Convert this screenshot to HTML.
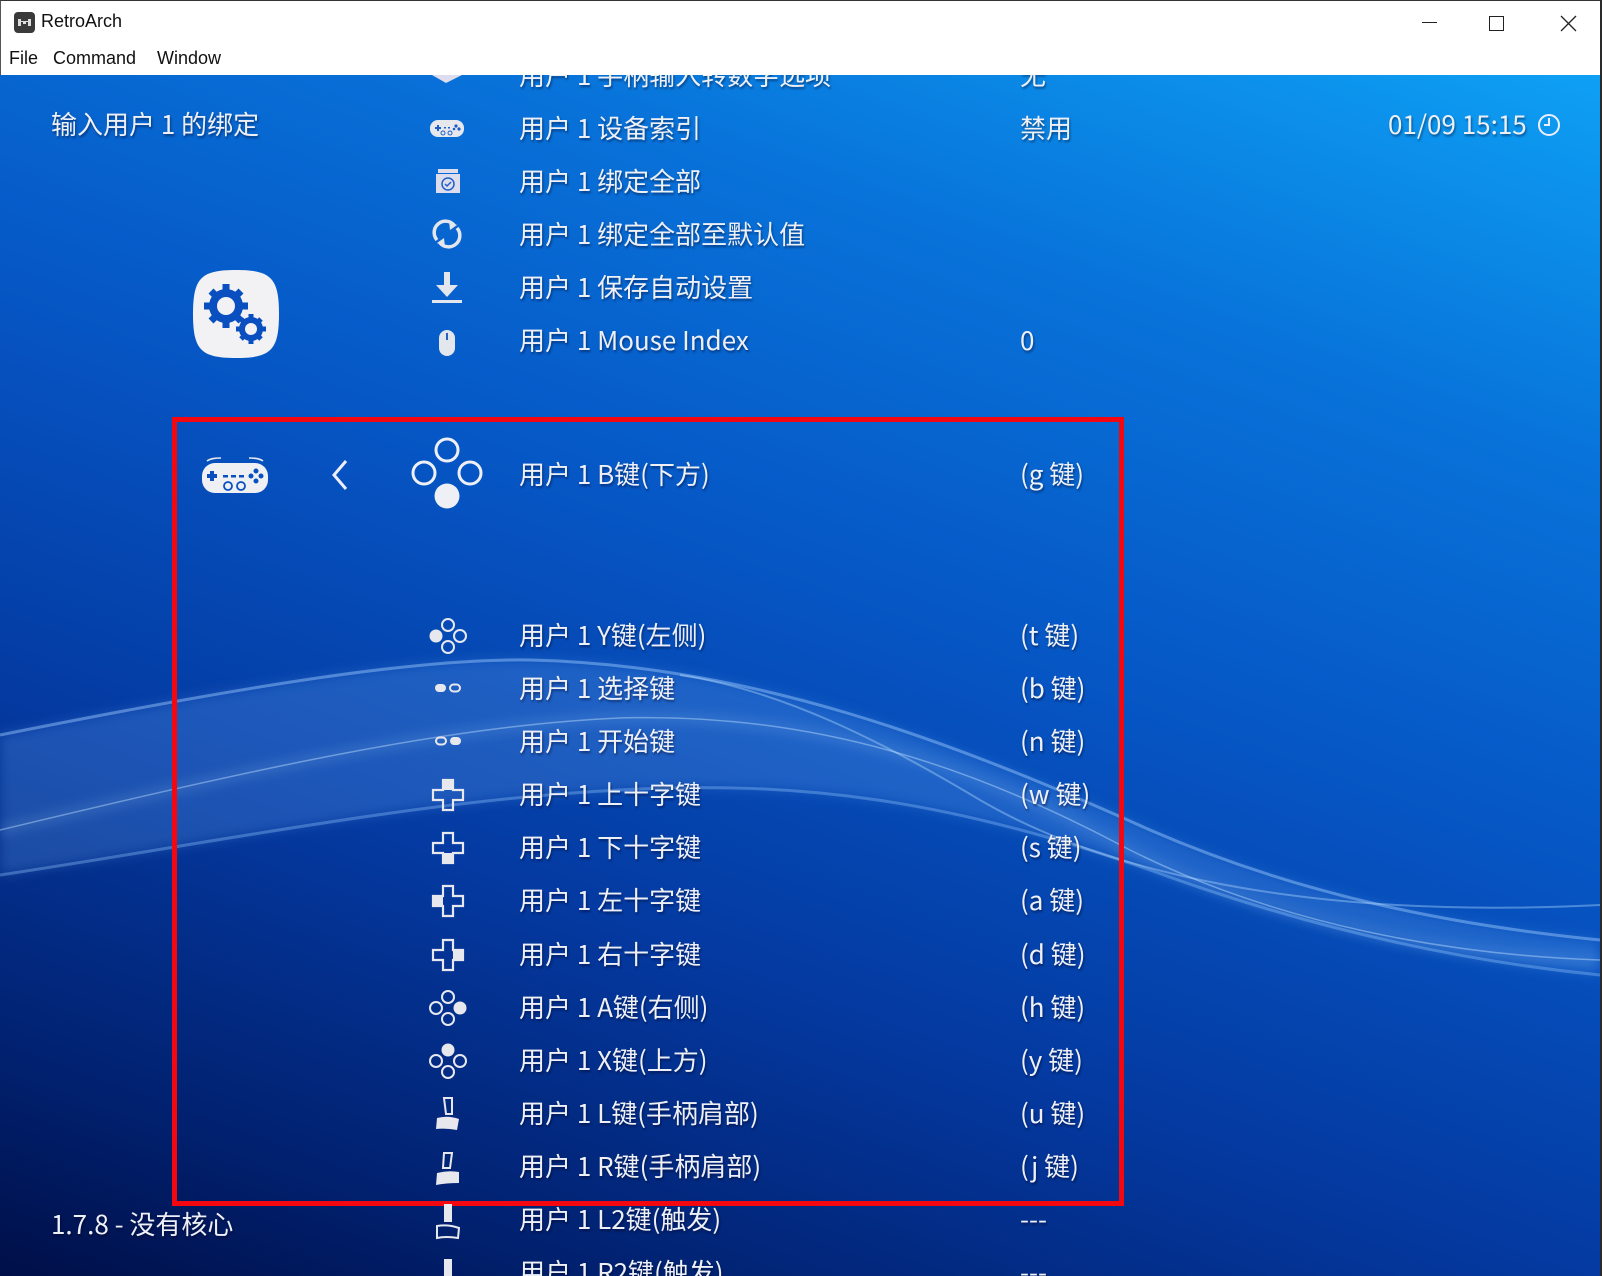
<!DOCTYPE html>
<html><head><meta charset="utf-8"><style>
*{margin:0;padding:0;box-sizing:border-box}
html,body{width:1602px;height:1276px;overflow:hidden;background:#fff}
body{position:relative;font-family:"Noto Sans CJK SC","Liberation Sans",sans-serif}
#tb{position:absolute;left:0;top:0;width:1602px;height:75px;background:#fff;border-top:1px solid #333;border-left:1px solid #555;border-right:2px solid #333}
.ui{font-family:"Liberation Sans","Noto Sans CJK SC",sans-serif;color:#111;position:absolute;font-size:18px;white-space:nowrap}
#main{position:absolute;left:0;top:75px;width:1600px;height:1201px;overflow:hidden;
background:linear-gradient(200deg,#0ea0f4 0%,#0873da 22%,#0655c4 45%,#0439a0 68%,#01206e 88%,#000f48 100%)}
#edge{position:absolute;left:1600px;top:0;width:2px;height:1276px;background:#2a2a2a}
.t{position:absolute;color:#eef0f6;font-size:26px;line-height:30px;white-space:nowrap;text-shadow:1px 2px 2px rgba(0,0,30,.45)}
.ic{position:absolute}
</style></head><body>
<div id="tb">
 <svg class="ic" style="left:13px;top:11px" width="21" height="21" viewBox="0 0 21 21"><rect width="21" height="21" rx="4" fill="#3a3a3a"/><path d="M4 7h3v2h7V7h3v7h-3v-2H7v2H4z" fill="#ddd"/><rect x="7" y="10" width="2" height="2" fill="#3a3a3a"/><rect x="12" y="10" width="2" height="2" fill="#3a3a3a"/></svg>
 <div class="ui" style="left:40px;top:10px">RetroArch</div>
 <div class="ui" style="left:8px;top:47px">File</div>
 <div class="ui" style="left:52px;top:47px">Command</div>
 <div class="ui" style="left:156px;top:47px">Window</div>
 <div style="position:absolute;left:1421px;top:21px;width:15px;height:1px;background:#222"></div>
 <div style="position:absolute;left:1488px;top:15px;width:15px;height:15px;border:1px solid #222"></div>
 <svg class="ic" style="left:1559px;top:14px" width="17" height="17"><path d="M1 1L16 16M16 1L1 16" stroke="#222" stroke-width="1.3"/></svg>
</div>
<div id="main">
 <svg style="position:absolute;left:0;top:0" width="1600" height="1201" viewBox="0 75 1600 1201">
  <defs><filter id="bl"><feGaussianBlur stdDeviation="6"/></filter></defs>
  <path d="M0 735 C250 685 420 658 530 660 C750 665 950 740 1150 830 C1300 895 1450 925 1600 940 L1600 975 C1450 960 1300 925 1150 870 C950 800 800 780 620 790 C420 800 200 845 0 875Z" fill="rgba(120,180,255,0.22)" filter="url(#bl)"/>
  <path d="M0 735 C250 685 420 658 530 660 C750 665 950 740 1150 830 C1300 895 1450 925 1600 940" fill="none" stroke="rgba(160,205,255,0.45)" stroke-width="3"/>
  <path d="M0 875 C200 845 420 800 620 790 C800 780 950 800 1150 870 C1300 925 1450 960 1600 975" fill="none" stroke="rgba(150,200,255,0.35)" stroke-width="3"/>
  <path d="M0 830 C250 770 450 725 620 718 C820 712 980 770 1130 850 C1280 925 1450 955 1600 960" fill="none" stroke="rgba(170,215,255,0.4)" stroke-width="4" filter="url(#bl)"/>
  <path d="M0 830 C250 770 450 725 620 718 C820 712 980 770 1130 850 C1280 925 1450 955 1600 960" fill="none" stroke="rgba(190,225,255,0.45)" stroke-width="1.5"/>
  <path d="M680 675 C780 690 880 740 980 800 C1100 870 1300 920 1600 905" fill="none" stroke="rgba(180,220,255,0.4)" stroke-width="2"/>
 </svg>
 <div style="position:absolute;left:172px;top:342px;width:952px;height:789px;border:5px solid #f4070f"></div>
</div>
<div id="edge"></div>

<div style="position:absolute;left:0;top:75px;width:1600px;height:1201px;overflow:hidden">
<div style="position:absolute;left:0;top:-75px">
<div class="t" style="left:51px;top:109px">输入用户 1 的绑定</div>
<div class="t" style="left:1388px;top:109px">01/09 15:15</div>
<svg class="ic" style="left:1537px;top:113px" width="24" height="24"><circle cx="12" cy="12" r="10" fill="none" stroke="#eef" stroke-width="2"/><path d="M12 5v7h-5" fill="none" stroke="#eef" stroke-width="2"/></svg>
<div class="t" style="left:51px;top:1209px">1.7.8 - 没有核心</div>

<svg class="ic" style="left:191px;top:268px" width="90" height="92" viewBox="0 0 90 92"><path d="M45 2C80 2 88 10 88 46S80 90 45 90 2 82 2 46 10 2 45 2Z" fill="#f2f2f4"/>
<g fill="#0a4fc0"><circle cx="35" cy="38" r="17"/><circle cx="60" cy="61" r="12"/>
<g stroke="#0a4fc0" stroke-width="7"><path d="M35 16v44M13 38h44M20 23l30 30M50 23L20 53"/><path d="M60 46v30M45 61h30M50 51l20 20M70 51L50 71" stroke-width="5"/></g></g>
<circle cx="35" cy="38" r="9" fill="#f2f2f4"/><circle cx="60" cy="61" r="6" fill="#f2f2f4"/></svg>

<div class="t" style="left:519px;top:60px">用户 1 手柄输入转数字选项</div><div class="t" style="left:1020px;top:60px">无</div>
<svg class="ic" style="left:430px;top:75px" width="34" height="8"><path d="M2 0 L16 8 L32 0Z" fill="#dde"/></svg>
<svg class="ic" style="left:429px;top:117px" width="36" height="22" viewBox="0 0 36 22"><rect x="1" y="3" width="34" height="17" rx="8" fill="#e6e8ee"/><g fill="#1a5fc8"><path d="M6 10h6v2H6zM8 8h2v6H8z"/><circle cx="27" cy="9" r="1.6"/><circle cx="30" cy="12" r="1.6"/><circle cx="25" cy="12" r="1.3"/><circle cx="14" cy="16" r="2" fill="none" stroke="#1a5fc8"/><circle cx="21" cy="16" r="2" fill="none" stroke="#1a5fc8"/><rect x="15" y="10" width="2" height="1.5"/><rect x="19" y="10" width="2" height="1.5"/></g></svg>
<div class="t" style="left:519px;top:113px">用户 1 设备索引</div><div class="t" style="left:1020px;top:113px">禁用</div>
<svg class="ic" style="left:435px;top:168px" width="26" height="26" viewBox="0 0 26 26"><rect x="3" y="1" width="20" height="4" fill="#dde"/><rect x="1" y="6" width="24" height="19" fill="#dde"/><circle cx="13" cy="16" r="6" fill="none" stroke="#2060c8" stroke-width="1.5"/><path d="M10 16l2 2 4-4" stroke="#2060c8" fill="none" stroke-width="1.5"/></svg>
<div class="t" style="left:519px;top:166px">用户 1 绑定全部</div>
<svg class="ic" style="left:432px;top:219px" width="30" height="30" viewBox="0 0 30 30"><path d="M22 6A11 11 0 0 0 5 21M8 24A11 11 0 0 0 25 9" fill="none" stroke="#e4e6ee" stroke-width="3.5"/><path d="M17 2l8 4-7 5zM13 28l-8-4 7-5z" fill="#e4e6ee"/></svg>
<div class="t" style="left:519px;top:219px">用户 1 绑定全部至默认值</div>
<svg class="ic" style="left:430px;top:271px" width="34" height="34" viewBox="0 0 34 34"><rect x="14" y="1" width="6" height="14" fill="#e4e6ee"/><path d="M6 14h22L17 26z" fill="#e4e6ee"/><rect x="2" y="29" width="30" height="3" fill="#e4e6ee"/></svg>
<div class="t" style="left:519px;top:272px">用户 1 保存自动设置</div>
<svg class="ic" style="left:438px;top:329px" width="18" height="28" viewBox="0 0 18 28"><rect x="1" y="1" width="16" height="26" rx="8" fill="#e4e6ee"/><rect x="8" y="4" width="2" height="7" fill="#2a60c0"/></svg>
<div class="t" style="left:519px;top:325px">用户 1 Mouse Index</div><div class="t" style="left:1020px;top:325px">0</div>

<svg class="ic" style="left:201px;top:455px" width="68" height="40" viewBox="0 0 68 40"><path d="M6 6C10 3 16 3 20 3M48 3C52 3 58 3 62 6" stroke="#e6e8ee" stroke-width="1.5" fill="none"/><rect x="1" y="8" width="66" height="30" rx="13" fill="#eef0f4"/><g fill="#0a4fc0"><path d="M6 19h10v4H6zM9 16h4v10H9z"/><rect x="22" y="20" width="5" height="2.5"/><rect x="30" y="20" width="5" height="2.5"/><rect x="38" y="20" width="5" height="2.5"/><circle cx="55" cy="16" r="2.5"/><circle cx="60" cy="21" r="2.5"/><circle cx="50" cy="21" r="2.5"/><circle cx="55" cy="26" r="2.5"/></g><circle cx="27" cy="31" r="4" fill="none" stroke="#0a4fc0" stroke-width="1.8"/><circle cx="40" cy="31" r="4" fill="none" stroke="#0a4fc0" stroke-width="1.8"/></svg>
<svg class="ic" style="left:331px;top:459px" width="18" height="32"><path d="M15 2L3 16l12 14" fill="none" stroke="#eef" stroke-width="3"/></svg>
<svg class="ic" style="left:409px;top:437px" width="76" height="76" viewBox="0 0 76 76"><g fill="none" stroke="#eef0f6" stroke-width="3"><circle cx="38" cy="13" r="11"/><circle cx="15" cy="36" r="11"/><circle cx="61" cy="36" r="11"/></g><circle cx="38" cy="59" r="12.5" fill="#eef0f6"/></svg>
<div class="t" style="left:519px;top:459px">用户 1 B键(下方)</div><div class="t" style="left:1020px;top:459px">(g 键)</div>
</div></div>

<div style="position:absolute;left:0;top:0;width:1600px;height:1276px;overflow:hidden">
<div class="t" style="left:519px;top:620px">用户 1 Y键(左侧)</div><div class="t" style="left:1020px;top:620px">(t 键)</div>
<svg class="ic" style="left:429px;top:617px" width="38" height="38" viewBox="0 0 38 38"><g fill="none" stroke="#e6e8ee" stroke-width="2"><circle cx="19" cy="8" r="6"/><circle cx="31" cy="19" r="6"/><circle cx="19" cy="30" r="6"/></g><circle cx="7" cy="19" r="6.5" fill="#e6e8ee"/></svg>
<div class="t" style="left:519px;top:673px">用户 1 选择键</div><div class="t" style="left:1020px;top:673px">(b 键)</div>
<svg class="ic" style="left:434px;top:682px" width="28" height="12"><rect x="1" y="2" width="11" height="8" rx="4" fill="#e6e8ee"/><rect x="16" y="2.5" width="10" height="7" rx="3.5" fill="none" stroke="#e6e8ee" stroke-width="2"/></svg>
<div class="t" style="left:519px;top:726px">用户 1 开始键</div><div class="t" style="left:1020px;top:726px">(n 键)</div>
<svg class="ic" style="left:434px;top:735px" width="28" height="12"><rect x="2" y="2.5" width="10" height="7" rx="3.5" fill="none" stroke="#e6e8ee" stroke-width="2"/><rect x="16" y="2" width="11" height="8" rx="4" fill="#e6e8ee"/></svg>

<svg class="ic" style="left:431px;top:778px" width="34" height="34" viewBox="0 0 34 34"><path d="M12 2h10v10h10v10H22v10H12V22H2V12h10z" fill="none" stroke="#e6e8ee" stroke-width="2.2"/><rect x="12" y="2" width="10" height="10" fill="#e6e8ee"/></svg>
<div class="t" style="left:519px;top:779px">用户 1 上十字键</div><div class="t" style="left:1020px;top:779px">(w 键)</div>
<svg class="ic" style="left:431px;top:831px" width="34" height="34" viewBox="0 0 34 34"><path d="M12 2h10v10h10v10H22v10H12V22H2V12h10z" fill="none" stroke="#e6e8ee" stroke-width="2.2"/><rect x="12" y="22" width="10" height="10" fill="#e6e8ee"/></svg>
<div class="t" style="left:519px;top:832px">用户 1 下十字键</div><div class="t" style="left:1020px;top:832px">(s 键)</div>
<svg class="ic" style="left:431px;top:884px" width="34" height="34" viewBox="0 0 34 34"><path d="M12 2h10v10h10v10H22v10H12V22H2V12h10z" fill="none" stroke="#e6e8ee" stroke-width="2.2"/><rect x="2" y="12" width="10" height="10" fill="#e6e8ee"/></svg>
<div class="t" style="left:519px;top:885px">用户 1 左十字键</div><div class="t" style="left:1020px;top:885px">(a 键)</div>
<svg class="ic" style="left:431px;top:938px" width="34" height="34" viewBox="0 0 34 34"><path d="M12 2h10v10h10v10H22v10H12V22H2V12h10z" fill="none" stroke="#e6e8ee" stroke-width="2.2"/><rect x="22" y="12" width="10" height="10" fill="#e6e8ee"/></svg>
<div class="t" style="left:519px;top:939px">用户 1 右十字键</div><div class="t" style="left:1020px;top:939px">(d 键)</div>

<svg class="ic" style="left:429px;top:989px" width="38" height="38" viewBox="0 0 38 38"><g fill="none" stroke="#e6e8ee" stroke-width="2"><circle cx="19" cy="8" r="6"/><circle cx="7" cy="19" r="6"/><circle cx="19" cy="30" r="6"/></g><circle cx="31" cy="19" r="6.5" fill="#e6e8ee"/></svg>
<div class="t" style="left:519px;top:992px">用户 1 A键(右侧)</div><div class="t" style="left:1020px;top:992px">(h 键)</div>
<svg class="ic" style="left:429px;top:1042px" width="38" height="38" viewBox="0 0 38 38"><g fill="none" stroke="#e6e8ee" stroke-width="2"><circle cx="31" cy="19" r="6"/><circle cx="7" cy="19" r="6"/><circle cx="19" cy="30" r="6"/></g><circle cx="19" cy="8" r="6.5" fill="#e6e8ee"/></svg>
<div class="t" style="left:519px;top:1045px">用户 1 X键(上方)</div><div class="t" style="left:1020px;top:1045px">(y 键)</div>

<svg class="ic" style="left:434px;top:1096px" width="28" height="38" viewBox="0 0 28 38"><path d="M10 2h8v16h-6z" fill="none" stroke="#e6e8ee" stroke-width="2"/><path d="M3 22 Q14 19 25 23 L23 34 Q12 32 2 33z" fill="#e6e8ee"/></svg>
<div class="t" style="left:519px;top:1098px">用户 1 L键(手柄肩部)</div><div class="t" style="left:1020px;top:1098px">(u 键)</div>
<svg class="ic" style="left:434px;top:1151px" width="28" height="38" viewBox="0 0 28 38"><path d="M10 2h8l-2 15h-7z" fill="none" stroke="#e6e8ee" stroke-width="2"/><path d="M3 22 Q14 19 25 21 L25 32 Q12 32 2 34z" fill="#e6e8ee"/></svg>
<div class="t" style="left:519px;top:1151px">用户 1 R键(手柄肩部)</div><div class="t" style="left:1020px;top:1151px">(j 键)</div>

<svg class="ic" style="left:434px;top:1204px" width="28" height="38" viewBox="0 0 28 38"><path d="M10 0h8v18h-8z" fill="#e6e8ee"/><path d="M3 22 Q14 20 25 24 L24 34 Q12 32 3 34z" fill="none" stroke="#e6e8ee" stroke-width="2"/></svg>
<div class="t" style="left:519px;top:1204px">用户 1 L2键(触发)</div><div class="t" style="left:1020px;top:1204px">---</div>
<svg class="ic" style="left:434px;top:1258px" width="28" height="20" viewBox="0 0 28 20"><path d="M10 1h8v19h-8z" fill="#e6e8ee"/></svg>
<div class="t" style="left:519px;top:1257px">用户 1 R2键(触发)</div><div class="t" style="left:1020px;top:1257px">---</div>
</div>
</body></html>
